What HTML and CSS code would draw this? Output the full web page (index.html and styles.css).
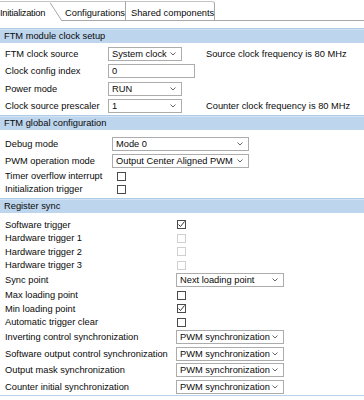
FILE: index.html
```html
<!DOCTYPE html>
<html>
<head>
<meta charset="utf-8">
<link rel="stylesheet" href="styles.css">
</head>
<body>
<div class="tabs">
  <div class="tab active">Initialization</div>
  <div class="slant"><svg width="12" height="20" viewBox="0 0 12 20"><path d="M0 1.5 L12 20" stroke="#a8a8a8" stroke-width="1" fill="none"/></svg></div>
  <div class="tab conf">Configurations</div>
  <div class="tab shared">Shared components</div>
  <div class="tab-fill"></div>
</div>

<div class="panel">
  <div class="sec-head">FTM module clock setup</div>
  <div class="form f1">
    <div class="lbl">FTM clock source</div>
    <div class="ctl"><div class="select narrow"><span>System clock</span><svg class="chev" width="6" height="4" viewBox="0 0 6 4"><path d="M0.5 0.5 L3 3 L5.5 0.5" stroke="#666" fill="none"/></svg></div></div>
    <div class="info">Source clock frequency is 80 MHz</div>

    <div class="lbl">Clock config index</div>
    <div class="ctl"><div class="input">0</div></div>
    <div class="info"></div>

    <div class="lbl">Power mode</div>
    <div class="ctl"><div class="select narrow"><span>RUN</span><svg class="chev" width="6" height="4" viewBox="0 0 6 4"><path d="M0.5 0.5 L3 3 L5.5 0.5" stroke="#666" fill="none"/></svg></div></div>
    <div class="info"></div>

    <div class="lbl">Clock source prescaler</div>
    <div class="ctl"><div class="select narrow"><span>1</span><svg class="chev" width="6" height="4" viewBox="0 0 6 4"><path d="M0.5 0.5 L3 3 L5.5 0.5" stroke="#666" fill="none"/></svg></div></div>
    <div class="info">Counter clock frequency is 80 MHz</div>
  </div>

  <div class="sec-head">FTM global configuration</div>
  <div class="form f2">
    <div class="lbl">Debug mode</div>
    <div class="ctl"><div class="select"><span>Mode 0</span><svg class="chev" width="6" height="4" viewBox="0 0 6 4"><path d="M0.5 0.5 L3 3 L5.5 0.5" stroke="#666" fill="none"/></svg></div></div>

    <div class="lbl">PWM operation mode</div>
    <div class="ctl"><div class="select"><span>Output Center Aligned PWM</span><svg class="chev" width="6" height="4" viewBox="0 0 6 4"><path d="M0.5 0.5 L3 3 L5.5 0.5" stroke="#666" fill="none"/></svg></div></div>

    <div class="lbl chk">Timer overflow interrupt</div>
    <div class="ctl chk"><span class="cb"></span></div>

    <div class="lbl chk">Initialization trigger</div>
    <div class="ctl chk"><span class="cb"></span></div>
  </div>

  <div class="sec-head">Register sync</div>
  <div class="form f3">
    <div class="lbl chk">Software trigger</div>
    <div class="ctl chk"><span class="cb"><svg width="9" height="9" viewBox="0 0 9 9"><path d="M1.5 4.5 L3.5 6.5 L7.5 1.5" stroke="#333" stroke-width="1" fill="none"/></svg></span></div>

    <div class="lbl chk">Hardware trigger 1</div>
    <div class="ctl chk"><span class="cb disabled"></span></div>

    <div class="lbl chk">Hardware trigger 2</div>
    <div class="ctl chk"><span class="cb disabled"></span></div>

    <div class="lbl chk">Hardware trigger 3</div>
    <div class="ctl chk"><span class="cb disabled"></span></div>

    <div class="lbl">Sync point</div>
    <div class="ctl"><div class="select"><span>Next loading point</span><svg class="chev" width="6" height="4" viewBox="0 0 6 4"><path d="M0.5 0.5 L3 3 L5.5 0.5" stroke="#666" fill="none"/></svg></div></div>

    <div class="lbl chk">Max loading point</div>
    <div class="ctl chk"><span class="cb"></span></div>

    <div class="lbl chk">Min loading point</div>
    <div class="ctl chk"><span class="cb"><svg width="9" height="9" viewBox="0 0 9 9"><path d="M1.5 4.5 L3.5 6.5 L7.5 1.5" stroke="#333" stroke-width="1" fill="none"/></svg></span></div>

    <div class="lbl chk">Automatic trigger clear</div>
    <div class="ctl chk"><span class="cb"></span></div>

    <div class="lbl">Inverting control synchronization</div>
    <div class="ctl"><div class="select"><span>PWM synchronization</span><svg class="chev" width="6" height="4" viewBox="0 0 6 4"><path d="M0.5 0.5 L3 3 L5.5 0.5" stroke="#666" fill="none"/></svg></div></div>

    <div class="lbl">Software output control synchronization</div>
    <div class="ctl"><div class="select"><span>PWM synchronization</span><svg class="chev" width="6" height="4" viewBox="0 0 6 4"><path d="M0.5 0.5 L3 3 L5.5 0.5" stroke="#666" fill="none"/></svg></div></div>

    <div class="lbl">Output mask synchronization</div>
    <div class="ctl"><div class="select"><span>PWM synchronization</span><svg class="chev" width="6" height="4" viewBox="0 0 6 4"><path d="M0.5 0.5 L3 3 L5.5 0.5" stroke="#666" fill="none"/></svg></div></div>

    <div class="lbl">Counter initial synchronization</div>
    <div class="ctl"><div class="select"><span>PWM synchronization</span><svg class="chev" width="6" height="4" viewBox="0 0 6 4"><path d="M0.5 0.5 L3 3 L5.5 0.5" stroke="#666" fill="none"/></svg></div></div>
  </div>
</div>
</body>
</html>
```

FILE: styles.css
```css
* { box-sizing: border-box; }
html, body { margin: 0; padding: 0; }
body {
  width: 364px;
  height: 400px;
  overflow: hidden;
  background: #ffffff;
  font-family: "Liberation Sans", Arial, sans-serif;
  font-size: 9.3px;
  color: #0a0a0a;
}

/* tabs */
.tabs {
  display: flex;
  height: 21px;
}
.tab {
  display: flex;
  align-items: center;
  padding-top: 3px;
  white-space: nowrap;
  border-top: 1px solid #c4c4c4;
  border-bottom: 1px solid #a8a8a8;
  margin-top: 1px;
  flex: none;
}
.tab.active {
  width: 50px;
  padding-left: 0;
  letter-spacing: -0.25px;
  border-bottom-color: transparent;
  background: #ffffff;
}
.slant {
  width: 12px;
  flex: none;
  margin-top: 1px;
  border-top: 1px solid #c4c4c4;
}
.slant svg { display: block; margin-top: -1px; }
.tab.conf {
  width: 64px;
  padding-left: 3px;
  border-right: 1px solid #a8a8a8;
}
.tab.shared {
  width: 89px;
  padding-left: 5px;
  border-right: 1px solid #a8a8a8;
  border-top-right-radius: 3px;
}
.tab-fill {
  flex: 1;
  border-bottom: 1px solid #a8a8a8;
}

/* panel */
.panel {
  padding-top: 7px;
  border-bottom: 1px solid #bcd2ea;
}
.sec-head {
  height: 15px;
  line-height: 14px;
  padding-left: 4px;
  background: #bdd5ed;
  border-top: 1px solid #aecbe8;
  box-shadow: inset 0 1px 0 #d3e3f4;
}

.form {
  display: grid;
  align-items: center;
}
.f1 {
  grid-template-columns: 108px 87px auto;
  row-gap: 0.5px;
  padding-top: 2px;
  padding-bottom: 0.5px;
}
.f2 {
  grid-template-columns: 112px 137px;
  padding-top: 5.5px;
  padding-bottom: 2px;
}
.f3 {
  grid-template-columns: 176px 108px;
  padding-top: 5px;
}
.lbl, .ctl, .info {
  height: 17px;
  display: flex;
  align-items: center;
  white-space: nowrap;
}
.lbl { padding-left: 5px; }
.f3 .lbl, .f3 .ctl { height: 16.5px; }
.f2 .chk { height: 13.3px; }
.f3 .chk { height: 13.5px; }
.info { padding-left: 11px; }

.select, .input {
  width: 100%;
  height: 14px;
  border: 1px solid #acacac;
  background: #fff;
  display: flex;
  align-items: center;
  padding-left: 3px;
  padding-right: 5px;
  white-space: nowrap;
}
.select.narrow { width: 74px; }
.select span { flex: 1; overflow: hidden; }
.chev { flex: none; display: block; }

.cb {
  width: 9px;
  height: 9px;
  border: 1px solid #4a4a4a;
  background: #fff;
  display: block;
  position: relative;
}
.f2 .cb { margin-left: 5px; }
.f3 .cb { margin-left: 1px; }
.cb svg { position: absolute; left: -1px; top: -1px; }
.cb.disabled { border-color: #d0d0d0; }
```
